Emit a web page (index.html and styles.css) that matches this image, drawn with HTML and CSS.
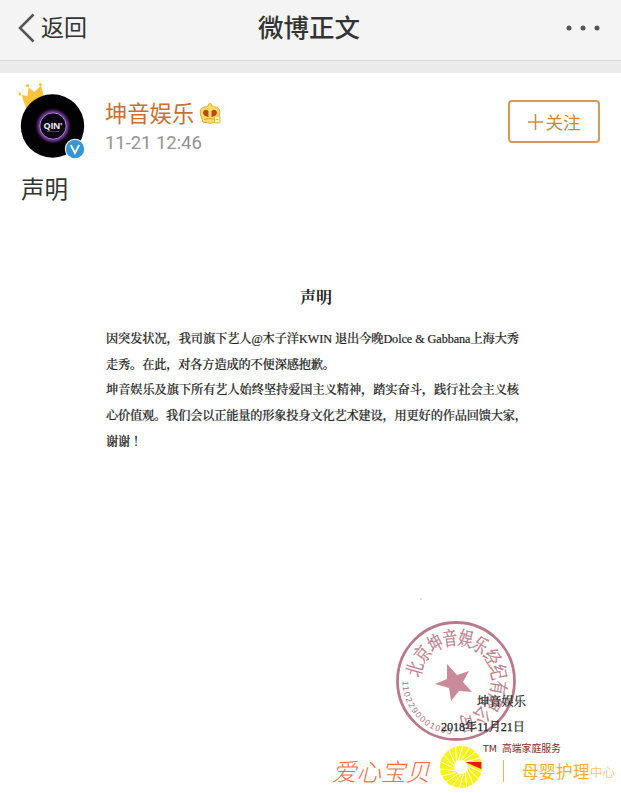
FILE: index.html
```html
<!DOCTYPE html>
<html lang="zh-CN">
<head>
<meta charset="utf-8">
<title>微博正文</title>
<link rel="stylesheet" href="styles.css">
</head>
<body>
<header class="nav">
  <a class="back"><svg width="17" height="30" viewBox="0 0 17 30"><path d="M15.500 1.500L2 15L15.500 28.500" fill="none" stroke="#555" stroke-width="2.500"/></svg><span>返回</span></a>
  <h1 class="nav-title">微博正文</h1>
  <svg class="more" width="34" height="6" viewBox="0 0 34 6" fill="#555"><circle cx="3" cy="3" r="2.500"/><circle cx="17" cy="3" r="2.500"/><circle cx="31" cy="3" r="2.500"/></svg>
</header>
<main class="post">
  <section class="author">
    <svg class="avatar" width="72" height="80" viewBox="0 0 72 80">
      <defs><filter id="glow" x="-30%" y="-30%" width="160%" height="160%"><feGaussianBlur stdDeviation="1.500"/></filter></defs>
      <g fill="#fbc23d"><path d="M6.500 13L12.500 14L13.500 5.500L19.500 10L26 3.500L29 15L11 26Z"/><circle cx="4.800" cy="12" r="1.500"/><circle cx="12.500" cy="3.500" r="1.600"/><circle cx="25.500" cy="2.500" r="1.600"/></g>
      <circle cx="37.500" cy="44" r="31.700" fill="#020104"/>
      <circle cx="38" cy="44" r="14" fill="#130b20" stroke="#8f45bd" stroke-width="3" filter="url(#glow)"/>
      <circle cx="38" cy="44" r="13.200" fill="#0b0612" stroke="#a884c9"/>
      <text class="avatar-name" x="28.500" y="46.500" textLength="19">QIN'</text>
      <path d="M32 49.500H44" stroke="#665b70" stroke-width=".7"/>
      <circle cx="60" cy="67" r="10.200" fill="#fff"/><circle cx="60" cy="67" r="9.200" fill="#3597d1"/>
      <path d="M55.800 63L60 71L64.200 63" fill="none" stroke="#fff" stroke-width="1.800"/>
    </svg>
    <div class="who">
      <div class="name"><span>坤音娱乐</span>
        <svg width="22" height="23" viewBox="0 0 22 23"><path d="M4 20L1.500 13Q0 5.500 6 5Q8 5 9 4Q9 1.500 11 1.500T13 4Q14 5 17 5Q22 6 20.500 13L18 20Q11 22.500 4 20Z" fill="#fbdc62" stroke="#e8ad3a"/><path d="M9.500 15Q3.500 14 4 10Q6 6 9.500 9ZM12.500 15V9Q16 6 18 10Q18.500 14 12.500 15Z" fill="#b94720"/><path d="M5 17.500Q11 15.500 17 17.500" fill="none" stroke="#e2a038"/><rect x="15.500" y="14" width="5.500" height="7" rx="1" fill="#fff3b0" stroke="#e6b442"/><path d="M17.500 17.500H19" stroke="#d99a35"/></svg>
      </div>
      <time>11-21 12:46</time>
    </div>
    <button class="follow"><svg width="15" height="16" viewBox="0 0 15 16"><path d="M7.500 0V16M0 8H15" stroke="#d28b3c" stroke-width="1.500"/></svg><span>关注</span></button>
  </section>
  <p class="caption">声明</p>
  <article class="letter">
    <h2>声明</h2>
    <svg class="copy" width="430" height="135" viewBox="0 0 430 135">
      <text x="1" y="17" textLength="413">因突发状况，我司旗下艺人@木子洋KWIN 退出今晚Dolce &amp; Gabbana上海大秀</text>
      <text x="1" y="43" textLength="229">走秀。在此，对各方造成的不便深感抱歉。</text>
      <text x="1" y="68" textLength="413">坤音娱乐及旗下所有艺人始终坚持爱国主义精神，踏实奋斗，践行社会主义核</text>
      <text x="1" y="94" textLength="421">心价值观。我们会以正能量的形象投身文化艺术建设，用更好的作品回馈大家，</text>
      <text x="1 13 28" y="120">谢谢！</text>
    </svg>
  </article>
  <svg class="stamp" width="160" height="156" viewBox="380 590 160 156">
    <circle cx="421" cy="599" r=".8" fill="#bbb"/>
    <circle cx="456" cy="681" r="58.500" fill="none" stroke="#b9798b" stroke-width="2.800"/>
    <path d="M447 664L457 675L469 671L463 682L472 692L459 691L451 701L449 688L435 684L447 679Z" fill="#c98b99"/>
    <g class="seal-name" transform="translate(456 681)">
      <text transform="rotate(-74) translate(0 -36) scale(.85 1.150)">北</text><text transform="rotate(-51) translate(0 -36) scale(.85 1.150)">京</text><text transform="rotate(-29) translate(0 -36) scale(.85 1.150)">坤</text><text transform="rotate(-8) translate(0 -36) scale(.85 1.150)">音</text><text transform="rotate(13) translate(0 -36) scale(.85 1.150)">娱</text><text transform="rotate(34) translate(0 -36) scale(.85 1.150)">乐</text><text transform="rotate(57) translate(0 -36) scale(.85 1.150)">经</text><text transform="rotate(78) translate(0 -36) scale(.85 1.150)">纪</text><text transform="rotate(99) translate(0 -36) scale(.85 1.150)">有</text><text transform="rotate(121) translate(0 -36) scale(.85 1.150)">限</text><text transform="rotate(143) translate(0 -36) scale(.85 1.150)">公</text><text transform="rotate(165) translate(0 -36) scale(.85 1.150)">司</text>
    </g>
    <path id="number-arc" d="M402.500 681A53.500 53.500 0 0 0 456 734.500" fill="none"/>
    <text class="seal-number"><textPath href="#number-arc" textLength="79">1102290001095</textPath></text>
    <text class="sign" x="477" y="706" textLength="49">坤音娱乐</text>
    <text class="sign" x="441" y="731" textLength="84">2018年11月21日</text>
  </svg>
  <footer class="brand">
    <span class="brand-name">爱心宝贝</span>
    <svg class="wheel" width="44" height="44" viewBox="-22 -22 44 44">
      <circle r="14" fill="none" stroke="#f9f218" stroke-width="14"/>
      <path d="M4 -5L20.300 -5L20.300 2Z" fill="#e81515"/>
      <g stroke="#fff" stroke-width=".9"><path id="vane" d="M0 -7L9 -19.500"/><use href="#vane" transform="rotate(20)"/><use href="#vane" transform="rotate(40)"/><use href="#vane" transform="rotate(80)"/><use href="#vane" transform="rotate(100)"/><use href="#vane" transform="rotate(120)"/><use href="#vane" transform="rotate(140)"/><use href="#vane" transform="rotate(160)"/><use href="#vane" transform="rotate(180)"/><use href="#vane" transform="rotate(200)"/><use href="#vane" transform="rotate(220)"/><use href="#vane" transform="rotate(240)"/><use href="#vane" transform="rotate(260)"/><use href="#vane" transform="rotate(280)"/><use href="#vane" transform="rotate(300)"/><use href="#vane" transform="rotate(320)"/><use href="#vane" transform="rotate(340)"/></g>
    </svg>
    <div class="brand-info">
      <div class="tagline"><span class="tm">TM</span><span>高端家庭服务</span></div>
      <div class="center"><span class="care">母婴护理</span><span class="hub">中心</span></div>
    </div>
  </footer>
</main>
</body>
</html>
```
FILE: styles.css
```css
* { box-sizing: border-box; }
body { margin: 0; width: 621px; height: 793px; overflow: hidden; background: #fff; font-family: Roboto, "Noto Sans CJK SC", sans-serif; color: #333; }
svg { display: block; flex: none; }
.nav { height: 61px; background: #f4f4f4; border-bottom: 1px solid #d9d9d9; display: grid; grid-template-columns: 1fr auto 1fr; align-items: center; padding: 0 21px 5px 18px; }
.back { display: flex; align-items: center; gap: 6px; font-size: 23px; line-height: 30px; }
.back span { padding-top: 2px; }
.nav-title { margin: 0; font-size: 25.500px; line-height: 34px; font-weight: 500; }
.more { justify-self: end; }
.post { border-top: 12px solid #ebebeb; height: 732px; }
.author { height: 95px; padding: 8px 21px 0 15px; display: flex; }
.avatar { margin-top: 1px; }
.who { margin: 17px 0 0 18px; flex: 1; }
.name { display: flex; align-items: center; gap: 5px; font-size: 22.300px; line-height: 32px; color: #c8702f; }
.name svg { margin-top: -1px; }
.who time { display: block; font-size: 18.500px; line-height: 24px; letter-spacing: -.05px; margin-top: 1px; color: #929292; }
.follow { margin: 19px 0 0; width: 92px; height: 43px; border: 2px solid #d79b50; border-radius: 4px; background: #fff; display: flex; align-items: center; justify-content: center; gap: 3px; padding: 0; color: #cf8534; font: 17.500px "Noto Sans CJK SC", sans-serif; }
.caption { margin: 5px 0 0 21px; height: 34px; font-size: 23.500px; line-height: 34px; }
.letter { height: 383px; padding: 79px 0 0 105px; font-family: "Liberation Serif", "Noto Serif CJK SC", "Noto Sans CJK SC", serif; }
.letter h2 { margin: 0 0 16px 195px; font-size: 16px; line-height: 24px; font-weight: 700; color: #222; }
.copy text { font-size: 12.200px; font-weight: 500; fill: #222; stroke: #222; stroke-width: .2px; }
.stamp { margin: 0 0 0 380px; }
.seal-name text { font: 17px "Noto Serif CJK SC", "Noto Sans CJK SC", serif; fill: #b97b8b; stroke: #b97b8b; stroke-width: .3px; text-anchor: middle; }
.seal-number { font: 8.500px "Liberation Sans", sans-serif; fill: #a86d7c; }
.sign { font: 12.200px "Liberation Serif", "Noto Serif CJK SC", "Noto Sans CJK SC", serif; fill: #222; stroke: #222; stroke-width: .25px; }
.avatar-name { font: bold 9px "Open Sans", sans-serif; fill: #eee7f6; }
.brand { height: 54px; margin-top: -5px; display: flex; padding: 0 0 0 332px; font-family: "Noto Sans CJK SC", sans-serif; }
.brand-name { width: 107px; margin-top: 6px; font-size: 24.500px; line-height: 47px; font-weight: 300; font-style: italic; color: #ee704b; white-space: nowrap; }
.wheel { margin-top: 4px; }
.brand-info { flex: 1; padding-top: 0; white-space: nowrap; }
.tagline { display: flex; align-items: center; gap: 5px; font-size: 9.800px; line-height: 14px; color: #8d2424; }
.tm { font: 9.500px "DejaVu Sans", sans-serif; }
.center { display: flex; align-items: center; height: 22px; margin: 5px 0 0 20px; padding-left: 18px; border-left: 1px solid #efb45c; color: #f5ad2e; }
.care { font-size: 16.500px; letter-spacing: .5px; line-height: 22px; }
.hub { font-size: 12.500px; font-weight: 300; line-height: 22px; padding-top: 2px; }
```
